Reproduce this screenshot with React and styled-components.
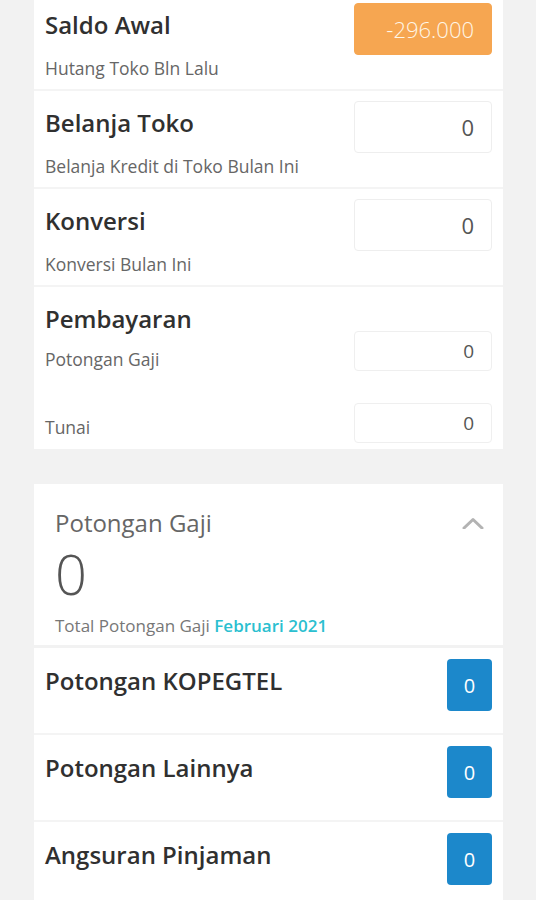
import React from "react";
import styled, {createGlobalStyle} from "styled-components";

const GlobalStyle = createGlobalStyle`
  html, body {
    margin: 0;
    padding: 0;
    background: #f2f2f2;
    font-family: "Open Sans", "Noto Sans", "Liberation Sans", sans-serif;
    color: #333;
  }
  * { box-sizing: border-box; }
`

const topRows = [
    {title: "Saldo Awal", sub: "Hutang Toko Bln Lalu", value: "-296.000", highlight: true},
    {title: "Belanja Toko", sub: "Belanja Kredit di Toko Bulan Ini", value: "0"},
    {title: "Konversi", sub: "Konversi Bulan Ini", value: "0"},
]

const deductions = ["Potongan KOPEGTEL", "Potongan Lainnya", "Angsuran Pinjaman"]

export default function App() {
    return (
        <>
            <GlobalStyle/>
            <Page>
                <Card>
                    {topRows.map(row => (
                        <Row key={row.title}>
                            <RowText>
                                <RowTitle>{row.title}</RowTitle>
                                <RowSub>{row.sub}</RowSub>
                            </RowText>
                            <ValueBox $highlight={row.highlight}>{row.value}</ValueBox>
                        </Row>
                    ))}
                    <PayBlock>
                        <PayTitle>Pembayaran</PayTitle>
                        <PayRow>
                            <PayLabel>Potongan Gaji</PayLabel>
                            <SmallInput readOnly value="0"/>
                        </PayRow>
                        <PayRow $gap>
                            <PayLabel $lift>Tunai</PayLabel>
                            <SmallInput readOnly value="0"/>
                        </PayRow>
                    </PayBlock>
                </Card>

                <Card $spaced>
                    <Summary>
                        <SummaryHead>
                            <SummaryTitle>Potongan Gaji</SummaryTitle>
                            <svg width="22" height="12" viewBox="0 0 22 12">
                                <polyline points="2,11 11,2.5 20,11" fill="none" stroke="#b3b3b3"
                                          strokeWidth="3" strokeLinecap="round" strokeLinejoin="round"/>
                            </svg>
                        </SummaryHead>
                        <BigNumber>0</BigNumber>
                        <Caption>Total Potongan Gaji <Accent>Februari 2021</Accent></Caption>
                    </Summary>
                    {deductions.map(name => (
                        <DeductRow key={name}>
                            <DeductTitle>{name}</DeductTitle>
                            <BlueBadge>0</BlueBadge>
                        </DeductRow>
                    ))}
                </Card>
            </Page>
        </>
    )
}

const Page = styled.div`
  margin-top: -7px;
  padding: 0 33px 40px 34px;
`

const Card = styled.div`
  background: #fff;
  margin-top: ${p => p.$spaced ? "35px" : "0"};
`

const Row = styled.div`
  display: flex;
  justify-content: space-between;
  align-items: flex-start;
  padding: 10px 11px 9px;
  border-bottom: 2px solid #f4f4f4;
`

const RowText = styled.div`
  display: flex;
  flex-direction: column;
`

const RowTitle = styled.div`
  margin-top: 6px;
  font-size: 24px;
  line-height: 32px;
  font-weight: 600;
  color: #303030;
`

const RowSub = styled.div`
  margin-top: 15px;
  font-size: 17.5px;
  line-height: 24px;
  color: #666;
`

const ValueBox = styled.div`
  width: 138px;
  height: 52px;
  border-radius: 4px;
  padding-right: 17px;
  display: flex;
  align-items: center;
  justify-content: flex-end;
  font-size: 22px;
  font-weight: ${p => p.$highlight ? 300 : 400};
  background: ${p => p.$highlight ? "#f6a651" : "#fff"};
  color: ${p => p.$highlight ? "#fff6e8" : "#555"};
  border: 1px solid ${p => p.$highlight ? "#f6a651" : "#eeeeee"};
`

const PayBlock = styled.div`
  padding: 20px 11px 6px;
`

const PayTitle = styled.div`
  font-size: 24px;
  line-height: 24px;
  font-weight: 600;
  color: #303030;
`

const PayRow = styled.div`
  display: flex;
  justify-content: space-between;
  align-items: flex-end;
  margin-top: ${p => p.$gap ? "32px" : "0"};
`

const PayLabel = styled.div`
  font-size: 17.5px;
  line-height: 24px;
  padding-bottom: ${p => p.$lift ? "4px" : "0"};
  color: #666;
`

const SmallInput = styled.input`
  width: 138px;
  height: 40px;
  border: 1px solid #efefef;
  border-radius: 4px;
  padding: 0 17px 0 0;
  text-align: right;
  font-family: inherit;
  font-size: 19px;
  color: #555;
  background: #fff;
  outline: none;
`

const Summary = styled.div`
  padding: 23px 19px 8px 21px;
  border-bottom: 3px solid #f2f2f2;
`

const SummaryHead = styled.div`
  display: flex;
  justify-content: space-between;
  align-items: center;
`

const SummaryTitle = styled.div`
  font-size: 24px;
  line-height: 32px;
  color: #666;
`

const BigNumber = styled.div`
  margin-top: 4px;
  font-size: 56px;
  line-height: 60px;
  font-weight: 300;
  color: #555;
`

const Caption = styled.div`
  margin-top: 12px;
  font-size: 17px;
  line-height: 22px;
  color: #777;
`

const Accent = styled.span`
  color: #2bbfd0;
  font-weight: 600;
`

const DeductRow = styled.div`
  display: flex;
  justify-content: space-between;
  align-items: flex-start;
  padding: 11px 11px 22px;
  border-bottom: 2px solid #f4f4f4;
`

const DeductTitle = styled.div`
  margin-top: 6px;
  font-size: 24px;
  line-height: 32px;
  font-weight: 600;
  color: #303030;
`

const BlueBadge = styled.div`
  width: 45px;
  height: 52px;
  border-radius: 4px;
  background: #1c88cb;
  color: #fff;
  font-size: 20px;
  display: flex;
  align-items: center;
  justify-content: center;
`
